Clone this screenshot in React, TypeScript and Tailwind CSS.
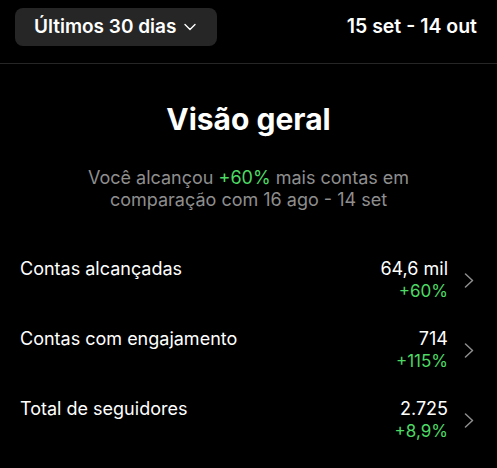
import React from 'react';

const rows = [
  { label: 'Contas alcançadas', value: '64,6 mil', delta: '+60%' },
  { label: 'Contas com engajamento', value: '714', delta: '+115%' },
  { label: 'Total de seguidores', value: '2.725', delta: '+8,9%' },
];

const Chevron = () => (
  <svg width="10" height="15" viewBox="0 0 10 15" fill="none" className="shrink-0">
    <path d="M1.5 1 L8.5 7.5 L1.5 14" stroke="#8e8e8e" strokeWidth="1.5" strokeLinecap="round" strokeLinejoin="round" />
  </svg>
);

const App = () => {
  return (
    <div className="w-[497px] h-[468px] bg-black text-white overflow-hidden" style={{ fontFamily: 'Inter, "Noto Sans", sans-serif' }}>
      {/* Header */}
      <div className="flex items-center justify-between pl-[15px] pr-[20px] pt-[8px] pb-[17px] border-b border-[#262626]">
        <button className="flex items-center gap-[8px] h-[38px] w-[202px] pl-[19px] rounded-[8px] bg-[#262626] text-[19px] font-semibold text-white">
          Últimos 30 dias
          <svg width="12" height="8" viewBox="0 0 12 8" fill="none">
            <path d="M1 1.5 L6 6.5 L11 1.5" stroke="white" strokeWidth="1.4" strokeLinecap="round" strokeLinejoin="round" />
          </svg>
        </button>
        <span className="text-[19.5px] font-semibold">15 set - 14 out</span>
      </div>

      {/* Overview */}
      <div className="flex flex-col items-center pt-[40px]">
        <h2 className="text-[30px] font-bold leading-none">Visão geral</h2>
        <p className="mt-[33px] text-[18px] leading-[22px] text-[#8e8e8e] text-center w-[360px]">
          Você alcançou <span className="text-[#4cd964]">+60%</span> mais contas em comparação com 16 ago - 14 set
        </p>
      </div>

      {/* Metrics */}
      <div className="flex flex-col mt-[47px]">
        {rows.map((r) => (
          <div key={r.label} className="flex items-start justify-between pl-[20px] pr-[23px] h-[70px]">
            <span className="text-[18px] leading-[22px]">{r.label}</span>
            <div className="flex items-center gap-[16px]">
              <div className="flex flex-col items-end">
                <span className="text-[18px] leading-[22px]">{r.value}</span>
                <span className="text-[17px] leading-[22px] text-[#4cd964]">{r.delta}</span>
              </div>
              <Chevron />
            </div>
          </div>
        ))}
      </div>
    </div>
  );
};

export default App;
